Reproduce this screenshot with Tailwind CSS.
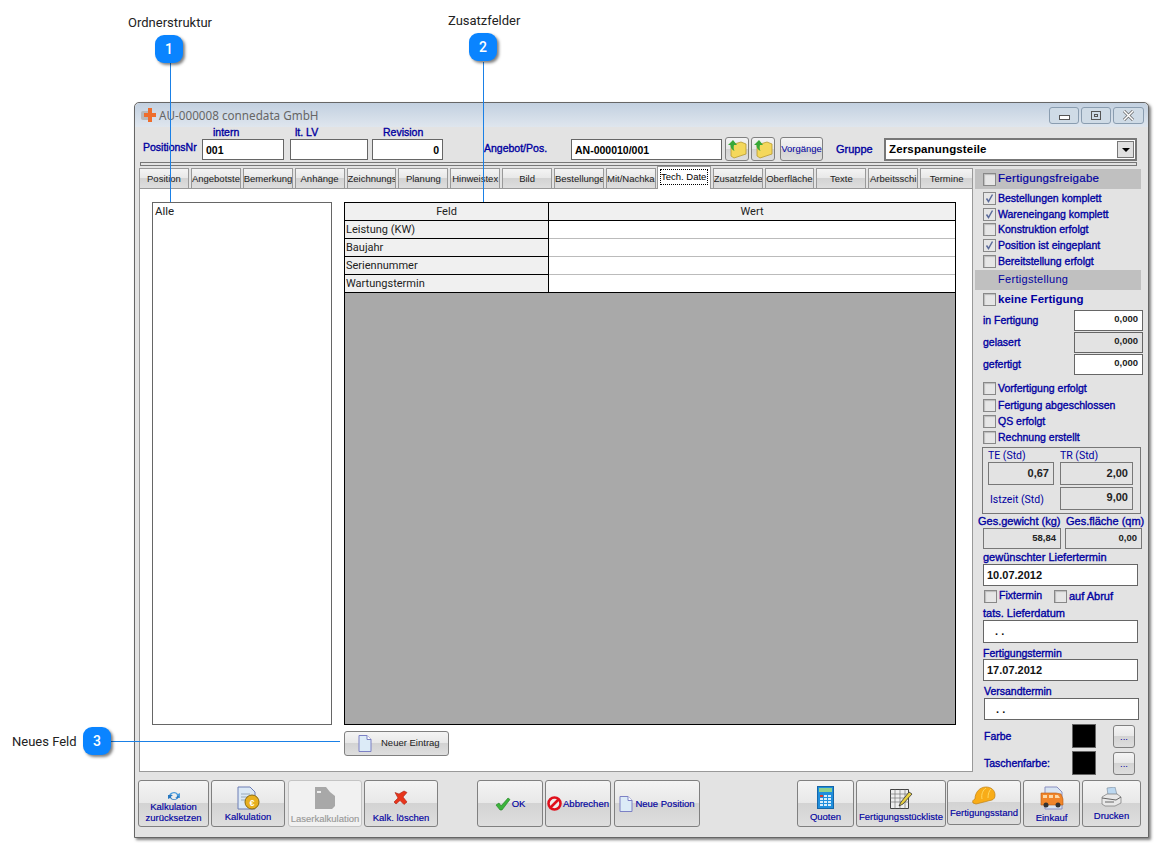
<!DOCTYPE html>
<html lang="de">
<head>
  <meta charset="UTF-8" />
  <title>AU-000008 connedata GmbH</title>
  <script src="https://cdn.jsdelivr.net/npm/@tailwindcss/browser@4"></script>
</head>
<body class="bg-white">
<div class="relative w-[1157px] h-[846px] overflow-hidden bg-white font-['Liberation_Sans',sans-serif]">

  <!-- Programmfenster -->
  <div class="absolute left-[134px] top-[102px] w-[1015px] h-[736px] flex flex-col border border-[#666] rounded-t-[5px] bg-[#e3e3e3] shadow-[2px_2px_3px_rgba(0,0,0,0.5)]">

    <!-- Titelleiste -->
    <div class="flex items-center h-[24px] shrink-0 rounded-t-[5px] bg-[linear-gradient(#c2d0e0,#dfe6ee)] pl-[6px]">
      <svg width="15" height="15" viewBox="0 0 15 15"><rect x="0" y="3" width="9" height="9" rx="2" fill="#b8b8b8"/><path d="M7 0h4v5h4v4h-4v5H7V9H3V5h4z" fill="#ee6d2c"/></svg>
      <span class="ml-[3px] mt-[1px] text-[11.700px] text-[#666] font-['Noto_Sans',sans-serif]">AU-000008 connedata GmbH</span>
      <div class="ml-auto flex gap-[2px] pr-[4px] pt-[1px]">
        <div class="w-[30px] h-[17px] flex items-center justify-center rounded-[3px] border border-[#8a9db0] bg-[#cfdbe6]"><div class="w-[11px] h-[5px] mt-[4px] border border-[#555] bg-white"></div></div>
        <div class="w-[30px] h-[17px] flex items-center justify-center rounded-[3px] border border-[#8a9db0] bg-[#cfdbe6]"><div class="w-[10px] h-[9px] border border-[#555] flex items-center justify-center"><div class="w-[4px] h-[3px] border border-[#555]"></div></div></div>
        <div class="w-[31px] h-[17px] flex items-center justify-center rounded-[3px] border border-[#8a9db0] bg-[#cfdbe6]"><svg width="13" height="11" viewBox="0 0 13 11"><path d="M2 1l9 9M11 1l-9 9" stroke="#666" stroke-width="3"/><path d="M2 1l9 9M11 1l-9 9" stroke="#fff" stroke-width="1.500"/></svg></div>
      </div>
    </div>

    <!-- Kopfzeile -->
    <div class="flex h-[35px] shrink-0 pl-[8px] text-[10.500px] text-[#0000a0] [-webkit-text-stroke:0.35px]">
      <span class="w-[59px] self-end mb-[9px] leading-[12px]">PositionsNr</span>
      <div class="w-[82px] flex flex-col"><span class="h-[12px] pl-[11px] leading-[10px]">intern</span><div class="h-[21px] border border-[#666] bg-white px-[3px] leading-[20px] text-black font-bold [-webkit-text-stroke:0]">001</div></div>
      <div class="w-[78px] ml-[6px] flex flex-col"><span class="h-[12px] pl-[5px] leading-[10px]">lt. LV</span><div class="h-[21px] border border-[#666] bg-white"></div></div>
      <div class="w-[71px] ml-[4px] flex flex-col"><span class="h-[12px] pl-[11px] leading-[10px]">Revision</span><div class="h-[21px] border border-[#666] bg-white px-[3px] leading-[20px] text-right text-black font-bold [-webkit-text-stroke:0]">0</div></div>
      <span class="w-[87px] ml-[41px] self-end mb-[8px] leading-[12px]">Angebot/Pos.</span>
      <div class="w-[151px] h-[21px] mt-[12px] border border-[#666] bg-white px-[3px] leading-[20px] text-black font-bold [-webkit-text-stroke:0]">AN-000010/001</div>
      <div class="w-[24px] h-[24px] ml-[3px] mt-[10px] flex items-center justify-center rounded-[3px] border border-[#808080] bg-[linear-gradient(#f4f4f4_0%,#e8e8e8_48%,#d3d3d3_50%,#dedede_100%)]">
        <svg width="20" height="20" viewBox="0 0 20 20"><path d="M4 6l10-3 5 2v10L7 19l-3-2z" fill="#f4d85c" stroke="#b89a30" stroke-width=".8"/><path d="M6 1L1 6h2.500c0 3 1.500 5 4 6-1-2-1-4-.5-6H10z" fill="#38a838"/></svg>
      </div>
      <div class="w-[24px] h-[24px] ml-[2px] mt-[10px] flex items-center justify-center rounded-[3px] border border-[#808080] bg-[linear-gradient(#f4f4f4_0%,#e8e8e8_48%,#d3d3d3_50%,#dedede_100%)]">
        <svg width="20" height="20" viewBox="0 0 20 20"><path d="M4 6l10-3 5 2v10L7 19l-3-2z" fill="#f4d85c" stroke="#b89a30" stroke-width=".8"/><path d="M6 1L1 6h2.500c0 3 1.500 5 4 6-1-2-1-4-.5-6H10z" fill="#38a838"/></svg>
      </div>
      <div class="w-[43px] h-[24px] ml-[5px] mt-[10px] flex items-center justify-center rounded-[3px] border border-[#808080] text-[9.500px] [-webkit-text-stroke:0] bg-[linear-gradient(#f4f4f4_0%,#e8e8e8_48%,#d3d3d3_50%,#dedede_100%)]">Vorgänge</div>
      <span class="w-[47px] ml-[13px] self-end mb-[7px] text-[11px] leading-[12px]">Gruppe</span>
      <div class="w-[253px] h-[23px] ml-[1px] mt-[11px] flex items-center justify-between border-2 border-[#777] bg-white pl-[3px] pr-[1px] text-[11.500px] text-black tracking-[0.15px] font-bold [-webkit-text-stroke:0]">
        Zerspanungsteile
        <div class="w-[17px] h-[17px] flex items-center justify-center border border-[#777] bg-[#e0e0e0]"><div class="w-0 h-0 border-x-[4px] border-x-transparent border-t-[4px] border-t-black"></div></div>
      </div>
    </div>

    <!-- Trenner -->
    <div class="h-[4px] shrink-0 mx-[5px] mr-[11px] border border-[#777]"></div>

    <!-- Hauptbereich -->
    <div class="flex h-[604px] shrink-0 mt-[2px] pl-[4px]">
      <div class="w-[834px] flex flex-col">
        <!-- Reiter -->
        <div class="flex h-[20px] shrink-0 gap-[2px] text-[9.500px] text-[#222] text-center leading-[19px] whitespace-nowrap">
          <div class="w-[50px] overflow-hidden border border-b-0 border-[#999] bg-[linear-gradient(#f4f4f4_0%,#e8e8e8_48%,#d3d3d3_50%,#dedede_100%)]">Position</div>
          <div class="w-[50px] overflow-hidden border border-b-0 border-[#999] bg-[linear-gradient(#f4f4f4_0%,#e8e8e8_48%,#d3d3d3_50%,#dedede_100%)]">Angebotste</div>
          <div class="w-[50px] overflow-hidden border border-b-0 border-[#999] bg-[linear-gradient(#f4f4f4_0%,#e8e8e8_48%,#d3d3d3_50%,#dedede_100%)]">Bemerkung</div>
          <div class="w-[50px] overflow-hidden border border-b-0 border-[#999] bg-[linear-gradient(#f4f4f4_0%,#e8e8e8_48%,#d3d3d3_50%,#dedede_100%)]">Anhänge</div>
          <div class="w-[50px] overflow-hidden border border-b-0 border-[#999] bg-[linear-gradient(#f4f4f4_0%,#e8e8e8_48%,#d3d3d3_50%,#dedede_100%)]">Zeichnungs</div>
          <div class="w-[50px] overflow-hidden border border-b-0 border-[#999] bg-[linear-gradient(#f4f4f4_0%,#e8e8e8_48%,#d3d3d3_50%,#dedede_100%)]">Planung</div>
          <div class="w-[50px] overflow-hidden border border-b-0 border-[#999] bg-[linear-gradient(#f4f4f4_0%,#e8e8e8_48%,#d3d3d3_50%,#dedede_100%)]">Hinweistex</div>
          <div class="w-[50px] overflow-hidden border border-b-0 border-[#999] bg-[linear-gradient(#f4f4f4_0%,#e8e8e8_48%,#d3d3d3_50%,#dedede_100%)]">Bild</div>
          <div class="w-[50px] overflow-hidden border border-b-0 border-[#999] bg-[linear-gradient(#f4f4f4_0%,#e8e8e8_48%,#d3d3d3_50%,#dedede_100%)]">Bestellunge</div>
          <div class="w-[50px] overflow-hidden border border-b-0 border-[#999] bg-[linear-gradient(#f4f4f4_0%,#e8e8e8_48%,#d3d3d3_50%,#dedede_100%)]">Mit/Nachka</div>
          <div class="relative z-10 w-[54px] h-[23px] -mt-[2px] -mx-[1px] p-[2px] border border-b-0 border-[#999] bg-white leading-[13px]"><div class="h-[16px] overflow-hidden border border-dotted border-black text-black">Tech. Date</div></div>
          <div class="w-[50px] ml-[1px] overflow-hidden border border-b-0 border-[#999] bg-[linear-gradient(#f4f4f4_0%,#e8e8e8_48%,#d3d3d3_50%,#dedede_100%)]">Zusatzfelde</div>
          <div class="w-[50px] overflow-hidden border border-b-0 border-[#999] bg-[linear-gradient(#f4f4f4_0%,#e8e8e8_48%,#d3d3d3_50%,#dedede_100%)]">Oberfläche</div>
          <div class="w-[50px] overflow-hidden border border-b-0 border-[#999] bg-[linear-gradient(#f4f4f4_0%,#e8e8e8_48%,#d3d3d3_50%,#dedede_100%)]">Texte</div>
          <div class="w-[50px] overflow-hidden border border-b-0 border-[#999] bg-[linear-gradient(#f4f4f4_0%,#e8e8e8_48%,#d3d3d3_50%,#dedede_100%)]">Arbeitsschi</div>
          <div class="w-[53px] overflow-hidden border border-b-0 border-[#999] bg-[linear-gradient(#f4f4f4_0%,#e8e8e8_48%,#d3d3d3_50%,#dedede_100%)]">Termine</div>
        </div>
        <!-- Reiterinhalt -->
        <div class="h-[584px] border border-[#999] bg-white pl-[12px] pt-[13px] flex">
          <div class="w-[180px] h-[523px] border border-[#666] px-[2px] text-[11.500px] leading-[16px] text-[#222] font-['Roboto',sans-serif]">Alle</div>
          <div class="ml-[12px] w-[612px] flex flex-col">
            <div class="h-[523px] flex flex-col border border-black bg-[#a9a9a9] text-[11px] text-[#222] font-['Roboto',sans-serif]">
              <div class="flex h-[18px] border-b border-black bg-[#f0f0f0] text-center leading-[17px]"><div class="w-[204px] border-r border-black">Feld</div><div class="flex-1">Wert</div></div>
              <div class="flex h-[18px] leading-[17px]"><div class="w-[204px] px-[1px] bg-[#f0f0f0] border-r border-b border-black">Leistung (KW)</div><div class="flex-1 bg-white border-b border-[#bbb]"></div></div>
              <div class="flex h-[18px] leading-[17px]"><div class="w-[204px] px-[1px] bg-[#f0f0f0] border-r border-b border-black">Baujahr</div><div class="flex-1 bg-white border-b border-[#bbb]"></div></div>
              <div class="flex h-[18px] leading-[17px]"><div class="w-[204px] px-[1px] bg-[#f0f0f0] border-r border-b border-black">Seriennummer</div><div class="flex-1 bg-white border-b border-[#bbb]"></div></div>
              <div class="flex h-[18px] border-b border-black leading-[17px]"><div class="w-[204px] px-[1px] bg-[#f0f0f0] border-r border-black">Wartungstermin</div><div class="flex-1 bg-white"></div></div>
            </div>
            <div class="mt-[6px] w-[105px] h-[25px] flex items-center rounded-[3px] border border-[#808080] pl-[13px] text-[9.500px] text-[#222] bg-[linear-gradient(#f4f4f4_0%,#e8e8e8_48%,#d3d3d3_50%,#dedede_100%)]">
              <svg width="14" height="17" viewBox="0 0 14 17"><path d="M1 .5h8l4 4v12H1z" fill="#dcebf7" stroke="#7c80c4"/><path d="M9 .5v4h4" fill="#fff" stroke="#7c80c4"/></svg>
              <span class="ml-[9px]">Neuer Eintrag</span>
            </div>
          </div>
        </div>
      </div>

      <!-- rechte Spalte -->
      <div class="w-[170px] ml-[2px] flex flex-col [&>*]:shrink-0 text-[10.500px] text-[#0000a0] [-webkit-text-stroke:0.35px] whitespace-nowrap">
        <div class="w-[166px] flex items-center h-[20px] mt-[1px] bg-[#c0c0c0] pl-[8px] text-[11.500px] tracking-[0.3px] [-webkit-text-stroke:0.2px]"><div class="w-[13px] h-[13px] border border-[#888] bg-[#e6e6e6] shadow-[inset_1px_1px_1px_#bbb]"></div><span class="ml-[2px]">Fertigungsfreigabe</span></div>
        <div class="flex items-center h-[16px] mt-[1px] pl-[8px]"><div class="w-[13px] h-[13px] border border-[#888] bg-[#e6e6e6] flex items-center justify-center"><svg width="9" height="9" viewBox="0 0 9 9"><path d="M1.500 4.500l2 3 4-7" fill="none" stroke="#5a6a9a" stroke-width="1.500"/></svg></div><span class="ml-[2px] pt-[2px]">Bestellungen komplett</span></div>
        <div class="flex items-center h-[16px] pl-[8px]"><div class="w-[13px] h-[13px] border border-[#888] bg-[#e6e6e6] flex items-center justify-center"><svg width="9" height="9" viewBox="0 0 9 9"><path d="M1.500 4.500l2 3 4-7" fill="none" stroke="#5a6a9a" stroke-width="1.500"/></svg></div><span class="ml-[2px] pt-[2px]">Wareneingang komplett</span></div>
        <div class="flex items-center h-[15px] pl-[8px]"><div class="w-[13px] h-[13px] border border-[#888] bg-[#e6e6e6] shadow-[inset_1px_1px_1px_#bbb]"></div><span class="ml-[2px]">Konstruktion erfolgt</span></div>
        <div class="flex items-center h-[16px] pl-[8px]"><div class="w-[13px] h-[13px] border border-[#888] bg-[#e6e6e6] flex items-center justify-center"><svg width="9" height="9" viewBox="0 0 9 9"><path d="M1.500 4.500l2 3 4-7" fill="none" stroke="#5a6a9a" stroke-width="1.500"/></svg></div><span class="ml-[2px] pt-[2px]">Position ist eingeplant</span></div>
        <div class="flex items-center h-[16px] pl-[8px]"><div class="w-[13px] h-[13px] border border-[#888] bg-[#e6e6e6] shadow-[inset_1px_1px_1px_#bbb]"></div><span class="ml-[2px] pt-[2px]">Bereitstellung erfolgt</span></div>
        <div class="w-[166px] flex items-center h-[20px] mt-[1px] bg-[#c0c0c0] pl-[23px] pb-[2px] text-[11px] tracking-[0.3px] [-webkit-text-stroke:0]">Fertigstellung</div>
        <div class="flex items-center h-[18px] pl-[8px] font-bold text-[11.500px] [-webkit-text-stroke:0]"><div class="w-[13px] h-[13px] border border-[#888] bg-[#e6e6e6] shadow-[inset_1px_1px_1px_#bbb]"></div><span class="ml-[2px] pt-[2px]">keine Fertigung</span></div>

        <div class="flex items-center h-[21px] mt-[2px] pl-[8px]"><span class="w-[91px]">in Fertigung</span><div class="w-[69px] h-[21px] border border-[#666] bg-white pr-[4px] text-right text-[9.500px] leading-[16px] font-bold text-[#222] [-webkit-text-stroke:0]">0,000</div></div>
        <div class="flex items-center h-[21px] mt-[1px] pl-[8px]"><span class="w-[91px]">gelasert</span><div class="w-[69px] h-[21px] border border-[#666] bg-[#e3e3e3] pr-[4px] text-right text-[9.500px] leading-[16px] font-bold text-[#222] [-webkit-text-stroke:0]">0,000</div></div>
        <div class="flex items-center h-[21px] mt-[1px] pl-[8px]"><span class="w-[91px]">gefertigt</span><div class="w-[69px] h-[21px] border border-[#666] bg-white pr-[4px] text-right text-[9.500px] leading-[16px] font-bold text-[#222] [-webkit-text-stroke:0]">0,000</div></div>

        <div class="flex items-center h-[16px] mt-[5px] pl-[8px]"><div class="w-[13px] h-[13px] border border-[#888] bg-[#e6e6e6] shadow-[inset_1px_1px_1px_#bbb]"></div><span class="ml-[2px] pt-[2px]">Vorfertigung erfolgt</span></div>
        <div class="flex items-center h-[16px] mt-[1px] pl-[8px]"><div class="w-[13px] h-[13px] border border-[#888] bg-[#e6e6e6] shadow-[inset_1px_1px_1px_#bbb]"></div><span class="ml-[2px] pt-[2px]">Fertigung abgeschlossen</span></div>
        <div class="flex items-center h-[16px] pl-[8px]"><div class="w-[13px] h-[13px] border border-[#888] bg-[#e6e6e6] shadow-[inset_1px_1px_1px_#bbb]"></div><span class="ml-[2px] pt-[2px]">QS erfolgt</span></div>
        <div class="flex items-center h-[16px] pl-[8px]"><div class="w-[13px] h-[13px] border border-[#888] bg-[#e6e6e6] shadow-[inset_1px_1px_1px_#bbb]"></div><span class="ml-[2px] pt-[2px]">Rechnung erstellt</span></div>

        <!-- Zeiten -->
        <div class="w-[159px] h-[67px] mt-[2px] ml-[7px] border border-[#777] grid grid-cols-[72px_73px] grid-rows-[14px_23px_23px] gap-x-0 gap-y-[0px] pl-[5px] text-[10.500px] [-webkit-text-stroke:0] font-['Roboto',sans-serif]">
          <span class="leading-[15px]">TE (Std)</span>
          <span class="leading-[15px]">TR (Std)</span>
          <div class="w-[66px] h-[23px] border border-[#777] pr-[4px] text-right text-[11px] leading-[21px] font-bold text-[#222] font-['Liberation_Sans',sans-serif]">0,67</div>
          <div class="w-[73px] h-[23px] border border-[#777] pr-[4px] text-right text-[11px] leading-[21px] font-bold text-[#222] font-['Liberation_Sans',sans-serif]">2,00</div>
          <span class="pl-[2px] pt-[2px] leading-[26px]">Istzeit (Std)</span>
          <div class="w-[73px] h-[23px] mt-[2px] border border-[#777] pr-[4px] text-right text-[11px] leading-[19px] font-bold text-[#222] font-['Liberation_Sans',sans-serif]">9,00</div>
        </div>

        <div class="flex h-[14px] pl-[3px] text-[11px] leading-[14px]"><span class="w-[88px]">Ges.gewicht (kg)</span><span>Ges.fläche (qm)</span></div>
        <div class="flex h-[21px] pl-[8px]"><div class="w-[78px] border border-[#777] pr-[4px] text-right text-[9.500px] leading-[18px] font-bold text-[#222] [-webkit-text-stroke:0]">58,84</div><div class="w-[77px] ml-[4px] border border-[#777] pr-[4px] text-right text-[9.500px] leading-[18px] font-bold text-[#222] [-webkit-text-stroke:0]">0,00</div></div>

        <div class="h-[14px] mt-[1px] pl-[8px] text-[11px] leading-[14px]">gewünschter Liefertermin</div>
        <div class="w-[155px] h-[22px] ml-[8px] border border-[#666] bg-white px-[3px] text-[11px] leading-[20px] font-bold text-[#111] [-webkit-text-stroke:0]">10.07.2012</div>
        <div class="flex items-center h-[18px] mt-[1px] pl-[9px]"><div class="w-[13px] h-[13px] border border-[#888] bg-[#e6e6e6] shadow-[inset_1px_1px_1px_#bbb]"></div><span class="ml-[2px] w-[55px]">Fixtermin</span><div class="w-[13px] h-[13px] border border-[#888] bg-[#e6e6e6] shadow-[inset_1px_1px_1px_#bbb]"></div><span class="ml-[2px] text-[11px]">auf Abruf</span></div>
        <div class="h-[14px] mt-[1px] pl-[8px] text-[11px] leading-[14px]">tats. Lieferdatum</div>
        <div class="w-[155px] h-[23px] ml-[8px] border border-[#666] bg-white px-[8px] text-[11px] leading-[20px] font-bold text-[#111] [-webkit-text-stroke:0]">&nbsp;. .</div>
        <div class="h-[14px] mt-[2px] pl-[8px] leading-[16px]">Fertigungstermin</div>
        <div class="w-[155px] h-[22px] ml-[8px] border border-[#666] bg-white px-[3px] text-[11px] leading-[20px] font-bold text-[#111] [-webkit-text-stroke:0]">17.07.2012</div>
        <div class="h-[14px] mt-[2px] pl-[9px] leading-[16px]">Versandtermin</div>
        <div class="w-[155px] h-[22px] mt-[1px] ml-[9px] border border-[#666] bg-white px-[8px] text-[11px] leading-[20px] font-bold text-[#111] [-webkit-text-stroke:0]">&nbsp;. .</div>
        <div class="flex items-center h-[24px] mt-[4px] pl-[9px]"><span class="w-[88px] pt-[2px]">Farbe</span><div class="w-[24px] h-[24px] border border-[#666] bg-black"></div><div class="w-[22px] h-[23px] ml-[17px] rounded-[3px] border border-[#808080] text-center text-[9.500px] leading-[22px] [-webkit-text-stroke:0] bg-[linear-gradient(#f4f4f4_0%,#e8e8e8_48%,#d3d3d3_50%,#dedede_100%)]">...</div></div>
        <div class="flex items-center h-[24px] mt-[3px] pl-[9px]"><span class="w-[88px] pt-[2px]">Taschenfarbe:</span><div class="w-[24px] h-[24px] border border-[#666] bg-black"></div><div class="w-[22px] h-[23px] ml-[17px] rounded-[3px] border border-[#808080] text-center text-[9.500px] leading-[22px] [-webkit-text-stroke:0] bg-[linear-gradient(#f4f4f4_0%,#e8e8e8_48%,#d3d3d3_50%,#dedede_100%)]">...</div></div>
      </div>
    </div>

    <!-- Schaltflächen unten -->
    <div class="flex mt-[8px] pl-[3px] text-[9.500px] text-[#0000a0] text-center leading-[11px] whitespace-nowrap [-webkit-text-stroke:0.15px]">
      <div class="w-[71px] h-[47px] flex flex-col items-center rounded-[3px] border border-[#808080] pt-[9px] bg-[linear-gradient(#f4f4f4_0%,#e8e8e8_48%,#d3d3d3_50%,#dedede_100%)]">
        <svg width="14" height="12" viewBox="0 0 14 12"><path d="M2 6a5 4.500 0 0 1 9-2l2-1v5H8l2-1.500A3 3 0 0 0 4 6z" fill="#4a9bdc"/><path d="M12 6a5 4.500 0 0 1-9 2l-2 1V5h5L4 6.500A3 3 0 0 0 10 6z" fill="#2878c0"/></svg>
        <span class="mt-[-1px]">Kalkulation</span><span>zurücksetzen</span>
      </div>
      <div class="w-[74px] h-[47px] ml-[2px] flex flex-col items-center rounded-[3px] border border-[#808080] pt-[5px] bg-[linear-gradient(#f4f4f4_0%,#e8e8e8_48%,#d3d3d3_50%,#dedede_100%)]">
        <svg width="24" height="24" viewBox="0 0 24 24"><path d="M2 1h12l5 5v17H2z" fill="#dbe8f5" stroke="#6c7cb4"/><path d="M5 8h9M5 11h9M5 14h6" stroke="#9ab" /><circle cx="16" cy="16" r="7" fill="#e8b020" stroke="#8a6a10"/><text x="16" y="19.500" font-size="9" font-weight="700" text-anchor="middle" fill="#fff">€</text></svg>
        <span class="mt-[1px]">Kalkulation</span>
      </div>
      <div class="w-[74px] h-[47px] ml-[3px] flex flex-col items-center rounded-[3px] border border-[#c4c4c4] pt-[5px] text-[#999] bg-[#f1f1f1]">
        <svg width="24" height="24" viewBox="0 0 24 24"><path d="M2 1h11l4 5 5 4v10l-3 3H2z" fill="#a8a8a8"/><path d="M4 5h4v2H4z" fill="#eee"/></svg>
        <span class="mt-[3px]">Laserkalkulation</span>
      </div>
      <div class="w-[74px] h-[47px] ml-[2px] flex flex-col items-center rounded-[3px] border border-[#808080] pt-[9px] bg-[linear-gradient(#f4f4f4_0%,#e8e8e8_48%,#d3d3d3_50%,#dedede_100%)]">
        <svg width="16" height="16" viewBox="0 0 16 16"><path d="M2 2.500l4 1.500 5-3 3 1.500-4 4.500 4 5-3 2.500-4-4-4 3.500L1 12l4-4z" fill="#e8351c" stroke="#a82010" stroke-width=".6"/></svg>
        <span class="mt-[6px]">Kalk. löschen</span>
      </div>
      <div class="w-[66px] h-[47px] ml-[39px] flex items-center justify-center rounded-[3px] border border-[#808080] bg-[linear-gradient(#f4f4f4_0%,#e8e8e8_48%,#d3d3d3_50%,#dedede_100%)]">
        <svg width="16" height="14" viewBox="0 0 16 14"><path d="M1 8l3-2 2 3 7-8 2 1.500L7 13H5z" fill="#3cb43c" stroke="#1e8020" stroke-width=".6"/></svg>
        <span class="ml-[1px]">OK</span>
      </div>
      <div class="w-[66px] h-[47px] ml-[2px] flex items-center justify-center rounded-[3px] border border-[#808080] bg-[linear-gradient(#f4f4f4_0%,#e8e8e8_48%,#d3d3d3_50%,#dedede_100%)]">
        <svg class="shrink-0" width="15" height="15" viewBox="0 0 15 15"><circle cx="7.500" cy="7.500" r="6" fill="#eee" stroke="#e0101c" stroke-width="2.500"/><path d="M3.500 11.500l8-8" stroke="#e0101c" stroke-width="2.500"/></svg>
        <span class="ml-[1px]">Abbrechen</span>
      </div>
      <div class="w-[86px] h-[47px] ml-[3px] flex items-center justify-center rounded-[3px] border border-[#808080] bg-[linear-gradient(#f4f4f4_0%,#e8e8e8_48%,#d3d3d3_50%,#dedede_100%)]">
        <svg width="14" height="16" viewBox="0 0 14 16"><path d="M1 .5h8l4 4v11H1z" fill="#dcebf7" stroke="#7c80c4"/><path d="M9 .5v4h4" fill="#fff" stroke="#7c80c4"/></svg>
        <span class="ml-[2px]">Neue Position</span>
      </div>
      <div class="w-[57px] h-[47px] ml-[97px] flex flex-col items-center rounded-[3px] border border-[#808080] pt-[5px] bg-[linear-gradient(#f4f4f4_0%,#e8e8e8_48%,#d3d3d3_50%,#dedede_100%)]">
        <svg width="17" height="23" viewBox="0 0 17 23"><rect x=".5" y=".5" width="16" height="22" fill="#1f8edc" stroke="#1466a8"/><rect x="2" y="2" width="13" height="4" fill="#8fd08c"/><path d="M3 9h3v2H3z" fill="#e03a2c"/><path d="M7 9h3v2H7zM11 9h3v2h-3zM3 12h3v2H3zM7 12h3v2H7zM11 12h3v2h-3zM3 15h3v2H3zM7 15h3v2H7zM11 15h3v2h-3zM3 18h3v2H3zM7 18h3v2H7zM11 18h3v2h-3z" fill="#d8ecfa"/></svg>
        <span class="mt-[2px]">Quoten</span>
      </div>
      <div class="w-[90px] h-[47px] ml-[2px] flex flex-col items-center rounded-[3px] border border-[#808080] pt-[8px] bg-[linear-gradient(#f4f4f4_0%,#e8e8e8_48%,#d3d3d3_50%,#dedede_100%)]">
        <svg width="23" height="20" viewBox="0 0 23 20"><path d="M.5.500h18v19H.5z" fill="#eee" stroke="#444"/><path d="M.5 5h18M.5 9h18M.5 13h18M5 .5v19M10 .5v19M15 .5v19" stroke="#777" stroke-width=".7"/><path d="M9 17l2-4 8-10 3 2-9 10z" fill="#e8d040" stroke="#333" stroke-width=".8"/></svg>
        <span class="mt-[2px]">Fertigungsstückliste</span>
      </div>
      <div class="w-[74px] h-[45px] ml-[1px] flex flex-col items-center rounded-[3px] border border-[#808080] pt-[5px] bg-[linear-gradient(#f4f4f4_0%,#e8e8e8_48%,#d3d3d3_50%,#dedede_100%)]">
        <svg width="24" height="19" viewBox="0 0 24 19"><path d="M3 13C3 6 8 1 14 1c5 0 9 3 9 8 0 3-1 4-3 5l-16 4-3-1c-1-2 0-3 2-4z" fill="#f8ac18" stroke="#c08010" stroke-width=".7"/><path d="M10 13c-1-5 1-9 4-11M16 12c0-4 1-7 3-9" fill="none" stroke="#ffd860"/></svg>
        <span class="mt-[2px]">Fertigungsstand</span>
      </div>
      <div class="w-[57px] h-[47px] ml-[2px] flex flex-col items-center rounded-[3px] border border-[#808080] pt-[5px] bg-[linear-gradient(#f4f4f4_0%,#e8e8e8_48%,#d3d3d3_50%,#dedede_100%)]">
        <svg width="24" height="24" viewBox="0 0 24 24"><path d="M5 1h12l5 5v17H5z" fill="#d8e4f2" stroke="#8a8fc0"/><path d="M1 7h15l5 1 2 5v6H1z" fill="#f0852a" stroke="#b85a10" stroke-width=".6"/><path d="M3 9h4v3H3zM9 9h4v3H9zM15 9h3l2 3h-5z" fill="#fcd9a8"/><circle cx="6" cy="19" r="2.500" fill="#333"/><circle cx="18" cy="19" r="2.500" fill="#333"/></svg>
        <span class="mt-[2px]">Einkauf</span>
      </div>
      <div class="w-[59px] h-[47px] ml-[2px] flex flex-col items-center rounded-[3px] border border-[#808080] pt-[6px] bg-[linear-gradient(#f4f4f4_0%,#e8e8e8_48%,#d3d3d3_50%,#dedede_100%)]">
        <svg width="21" height="20" viewBox="0 0 21 20"><path d="M6 1l8-1 2 8H7z" fill="#bcd8f0" stroke="#789"  stroke-width=".6"/><path d="M1 10l5-3h10l4 3v6l-6 3H4l-3-2z" fill="#e8e8e8" stroke="#777" stroke-width=".7"/><path d="M1 11l14 2 5-3M4 15h9" fill="none" stroke="#666" stroke-width="1"/></svg>
        <span class="mt-[3px]">Drucken</span>
      </div>
    </div>
  </div>

  <!-- Anmerkungen -->
  <span class="absolute left-[128px] top-[15px] text-[13px] leading-[16px] text-[#222] font-['Roboto',sans-serif]">Ordnerstruktur</span>
  <span class="absolute left-[448px] top-[13px] text-[13px] leading-[16px] text-[#222] font-['Roboto',sans-serif]">Zusatzfelder</span>
  <span class="absolute left-[12px] top-[734px] text-[13px] leading-[16px] text-[#222] font-['Roboto',sans-serif]">Neues Feld</span>

  <div class="absolute left-[170px] top-[63px] w-px h-[139px] bg-[#1a80e6]"></div>
  <div class="absolute left-[483px] top-[62px] w-px h-[140px] bg-[#1a80e6]"></div>
  <div class="absolute left-[111px] top-[741px] w-[229px] h-px bg-[#1a80e6]"></div>

  <div class="absolute left-[155px] top-[35px] w-[28px] h-[28px] flex items-center justify-center rounded-[9px] bg-[#0a84ff] text-[14px] font-medium text-white shadow-[2px_2px_3px_rgba(0,0,0,0.5)] font-['Roboto',sans-serif]">1</div>
  <div class="absolute left-[469px] top-[33px] w-[28px] h-[28px] flex items-center justify-center rounded-[9px] bg-[#0a84ff] text-[14px] font-medium text-white shadow-[2px_2px_3px_rgba(0,0,0,0.5)] font-['Roboto',sans-serif]">2</div>
  <div class="absolute left-[83px] top-[727px] w-[28px] h-[28px] flex items-center justify-center rounded-[9px] bg-[#0a84ff] text-[14px] font-medium text-white shadow-[2px_2px_3px_rgba(0,0,0,0.5)] font-['Roboto',sans-serif]">3</div>
</div>
</body>
</html>
